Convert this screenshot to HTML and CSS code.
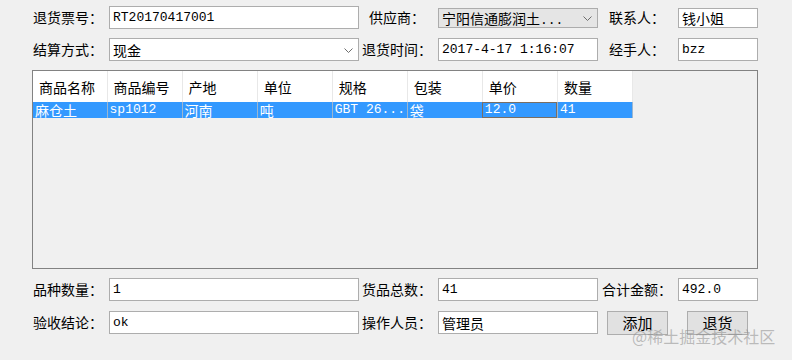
FILE: index.html
```html
<!DOCTYPE html>
<html>
<head>
	<meta charset="utf-8">
	<title>退货</title>
	<link rel="stylesheet" href="styles.css">
</head>
<body>
	<div class="form">
		<div class="row">
			<span class="label">退货票号：</span>
			<span class="field wide mono">RT20170417001</span>
			<span class="label mid ind-10">供应商：</span>
			<span class="field medium combo locked small"><span>宁阳信通膨润土<span class="mono">...</span></span>
				<svg class="arrow" width="9" height="5" viewBox="0 0 9 5"><path d="M0.5 0.5 L4.5 4.5 L8.5 0.5" fill="none" stroke="#6d6d6d" stroke-width="1"/></svg>
			</span>
			<span class="label end ind-11">联系人：</span>
			<span class="field narrow small">钱小姐</span>
		</div>
		<div class="row">
			<span class="label">结算方式：</span>
			<span class="field wide combo">现金
				<svg class="arrow" width="9" height="5" viewBox="0 0 9 5"><path d="M0.5 0.5 L4.5 4.5 L8.5 0.5" fill="none" stroke="#6d6d6d" stroke-width="1"/></svg>
			</span>
			<span class="label mid ind-3">退货时间：</span>
			<span class="field medium mono">2017-4-17 1:16:07</span>
			<span class="label end ind-11">经手人：</span>
			<span class="field narrow mono">bzz</span>
		</div>

		<div class="grid">
			<table>
				<tr class="head">
					<th>商品名称</th><th>商品编号</th><th>产地</th><th>单位</th><th>规格</th><th>包装</th><th>单价</th><th>数量</th>
				</tr>
				<tr class="picked">
					<td>麻仓土</td><td class="mono">sp1012</td><td>河南</td><td>吨</td><td class="mono">GBT 26...</td><td>袋</td><td class="mono focus">12.0</td><td class="mono">41</td>
				</tr>
			</table>
		</div>

		<div class="row">
			<span class="label">品种数量：</span>
			<span class="field wide mono">1</span>
			<span class="label mid ind-3">货品总数：</span>
			<span class="field medium mono">41</span>
			<span class="label end ind-4">合计金额：</span>
			<span class="field narrow mono">492.0</span>
		</div>
		<div class="row last">
			<span class="label">验收结论：</span>
			<span class="field wide mono">ok</span>
			<span class="label mid ind-3">操作人员：</span>
			<span class="field medium">管理员</span>
			<span class="btn first">添加</span>
			<span class="btn">退货</span>
		</div>
	</div>

	<div class="mark">@稀土掘金技术社区</div>
</body>
</html>
```

FILE: styles.css
```css
body {
	margin: 0; background: #f0f0f0; font-family: "Noto Sans CJK SC", sans-serif; font-size: 14px; color: #000;
	width: 792px; height: 360px; position: relative; overflow: hidden;
}
.form { padding: 6px 0 0 33px; }
.row { display: flex; align-items: center; height: 23px; margin-bottom: 9px; }
.row.last { margin-top: 10px; }

.label { width: 76px; flex: none; white-space: nowrap; line-height: 23px; box-sizing: border-box; }
.label.mid { width: 79px; }
.label.end { width: 80px; }
.ind-3 { padding-left: 3px; } .ind-4 { padding-left: 4px; } .ind-10 { padding-left: 10px; } .ind-11 { padding-left: 11px; }

.field {
	position: relative; display: flex; align-items: center; flex: none; box-sizing: border-box; height: 23px;
	background: #fff; border: 1px solid #adadad; padding-left: 3px; white-space: nowrap; overflow: hidden;
}
.field.small { height: 20px; }
.wide { width: 250px; } .medium { width: 160px; } .narrow { width: 80px; }
.combo.locked { background: #e5e5e5; border-color: #acacac; }
.arrow { position: absolute; right: 5px; top: 50%; margin-top: -2px; }

.mono { font-family: "Liberation Mono", "Noto Sans CJK SC", monospace; font-size: 13px; }

.grid {
	margin: 0 0 9px -1px; width: 726px; height: 199px; box-sizing: border-box;
	border: 1px solid #828282; background: #f0f0f0;
}
table { border-collapse: collapse; table-layout: fixed; width: 600px; }
th, td { width: 75px; padding: 0; text-align: left; white-space: nowrap; }
th {
	height: 31px; font-weight: normal; background: #fff; padding-left: 6px; box-sizing: border-box;
	border-right: 1px solid #e8e8e8;
}
th:first-child { width: 74px; }
td { height: 16px; line-height: 16px; background: #3399ff; color: #fff; border-right: 1px solid #9cb6cf; padding-left: 2px; box-sizing: border-box; }
td.focus { outline: 1px solid #7a6e62; outline-offset: -1px; }

.btn {
	display: flex; align-items: center; justify-content: center; box-sizing: border-box; height: 24px;
	width: 61px; background: #e1e1e1; border: 1px solid #adadad; margin-left: 19px; font-size: 15px;
}
.btn.first { margin-left: 9px; }

.mark {
	position: absolute; left: 632px; top: 324px; font-size: 16px; color: rgba(140, 140, 140, 0.55);
}
```
